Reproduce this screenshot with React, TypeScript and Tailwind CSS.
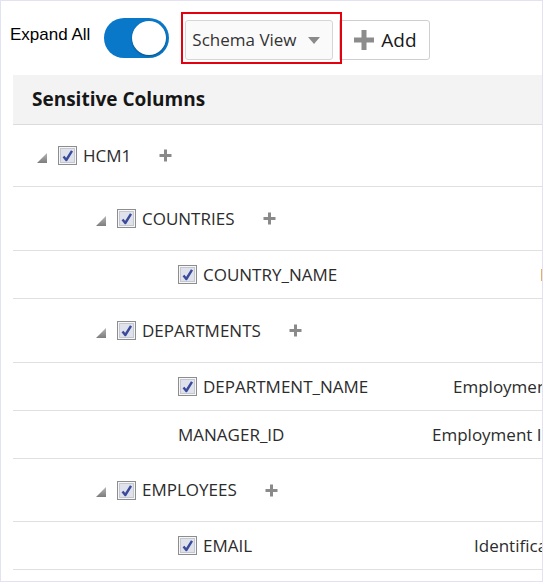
import React from "react";

type Row = {
  level: 0 | 1 | 2;
  label: string;
  expandable?: boolean;
  checkbox?: boolean;
  info?: string;
  infoPad?: number;
  height: string;
};

const rows: Row[] = [
  { level: 0, label: "HCM1", expandable: true, checkbox: true, height: "h-[62px]" },
  { level: 1, label: "COUNTRIES", expandable: true, checkbox: true, height: "h-[64px]" },
  { level: 2, label: "COUNTRY_NAME", checkbox: true, info: "Personal Information", infoPad: 127, height: "h-[48px]" },
  { level: 1, label: "DEPARTMENTS", expandable: true, checkbox: true, height: "h-[64px]" },
  { level: 2, label: "DEPARTMENT_NAME", checkbox: true, info: "Employment Information", infoPad: 40, height: "h-[48px]" },
  { level: 2, label: "MANAGER_ID", info: "Employment Information", infoPad: 19, height: "h-[48px]" },
  { level: 1, label: "EMPLOYEES", expandable: true, checkbox: true, height: "h-[63px]" },
  { level: 2, label: "EMAIL", checkbox: true, info: "Identification Information", infoPad: 61, height: "h-[48px]" },
];

function Checkbox() {
  return (
    <svg width="19" height="19" viewBox="0 0 19 19" className="shrink-0">
      <rect x="0.5" y="0.5" width="18" height="18" fill="#f7f7f7" stroke="#8d8d8d" />
      <rect x="2.5" y="2.5" width="14" height="14" fill="#dfe2ea" stroke="#c4c7cf" />
      <path d="M5.5 10.5 L8.3 14 L14 4.8" stroke="#3a4a9c" strokeWidth="2.4" fill="none" strokeLinejoin="round" />
    </svg>
  );
}

function Triangle() {
  return (
    <svg width="10" height="10" viewBox="0 0 10 10" className="shrink-0 mt-[4px]">
      <defs>
        <linearGradient id="tri" x1="0" y1="0" x2="0" y2="1">
          <stop offset="0" stopColor="#b5b5b5" />
          <stop offset="1" stopColor="#7d7d7d" />
        </linearGradient>
      </defs>
      <polygon points="10,0 10,10 0,10" fill="url(#tri)" />
    </svg>
  );
}

function SmallPlus() {
  return (
    <svg width="13" height="13" viewBox="0 0 13 13" className="shrink-0">
      <path d="M6.5 0.5 V12.5 M0.5 6.5 H12.5" stroke="#8a8a8a" strokeWidth="3" />
    </svg>
  );
}

function TreeRow({ row }: { row: Row }) {
  const indent =
    row.level === 0 ? "pl-[24px]" : row.level === 1 ? "pl-[83px]" : "pl-[165px]";
  return (
    <div className={`flex items-center border-b border-[#e0e0e0] ${row.height}`}>
      <div className={`w-[400px] shrink-0 flex items-center ${indent}`}>
        {row.expandable && (
          <div className="mr-[11px] flex items-center">
            <Triangle />
          </div>
        )}
        {row.checkbox && <Checkbox />}
        <span className={`text-[17px] text-[#2c2c2c] whitespace-nowrap ${row.checkbox ? "ml-[6px]" : ""}`}>
          {row.label}
        </span>
        {row.expandable && (
          <div className="ml-[28px] flex items-center">
            <SmallPlus />
          </div>
        )}
      </div>
      {row.info && (
        <div
          className="whitespace-nowrap text-[17px] text-[#2c2c2c]"
          style={{ paddingLeft: row.infoPad }}
        >
          {row.info}
        </div>
      )}
    </div>
  );
}

export default function App() {
  return (
    <div
      className="w-[543px] h-[582px] bg-white border border-[#e2e2f3] overflow-hidden"
      style={{ fontFamily: '"Open Sans", "Noto Sans", sans-serif' }}
    >
      {/* Toolbar */}
      <div className="relative h-[74px] flex items-start">
        <span
          className="ml-[9px] mt-[24px] text-[17px] leading-[20px] text-black whitespace-nowrap"
          style={{ fontFamily: '"Liberation Sans", Arial, sans-serif' }}
        >
          Expand All
        </span>
        <div className="ml-[14px] mt-[17px] w-[65px] h-[40px] rounded-full bg-[#0a78c8] flex items-center justify-end pr-[3px]">
          <div className="w-[34px] h-[34px] rounded-full bg-white shadow-[0_1px_2px_rgba(0,0,0,0.35)]" />
        </div>
        <div className="ml-[16px] mt-[19px] w-[148px] h-[40px] rounded-[3px] border border-[#d6d6d6] bg-[#fafafa] flex items-center pl-[6px] pr-[12px]">
          <span className="text-[17px] text-[#333] flex-1">Schema View</span>
          <svg width="12" height="7" viewBox="0 0 12 7">
            <polygon points="0,0 12,0 6,7" fill="#8a8a8a" />
          </svg>
        </div>
        <div className="ml-[6px] mt-[19px] w-[91px] h-[40px] rounded-r-[3px] border border-[#cfcfcf] bg-white flex items-center pl-[14px] gap-[7px]">
          <svg width="20" height="20" viewBox="0 0 20 20">
            <path d="M10 0 V20 M0 10 H20" stroke="#8c8c8c" strokeWidth="5" />
          </svg>
          <span className="text-[19px] text-[#1a1a1a]">Add</span>
        </div>
        {/* annotation */}
        <div className="absolute left-[180px] top-[11px] w-[161px] h-[52px] border-2 border-[#e3000f]" />
      </div>

      {/* Table */}
      <div className="ml-[12px]">
        <div className="h-[50px] bg-[#f3f3f3] border-b border-[#dcdcdc] flex items-center pl-[19px]">
          <span className="text-[19px] font-bold text-[#161616]">Sensitive Columns</span>
        </div>
        {rows.map((r) => (
          <TreeRow key={r.label} row={r} />
        ))}
      </div>
    </div>
  );
}
